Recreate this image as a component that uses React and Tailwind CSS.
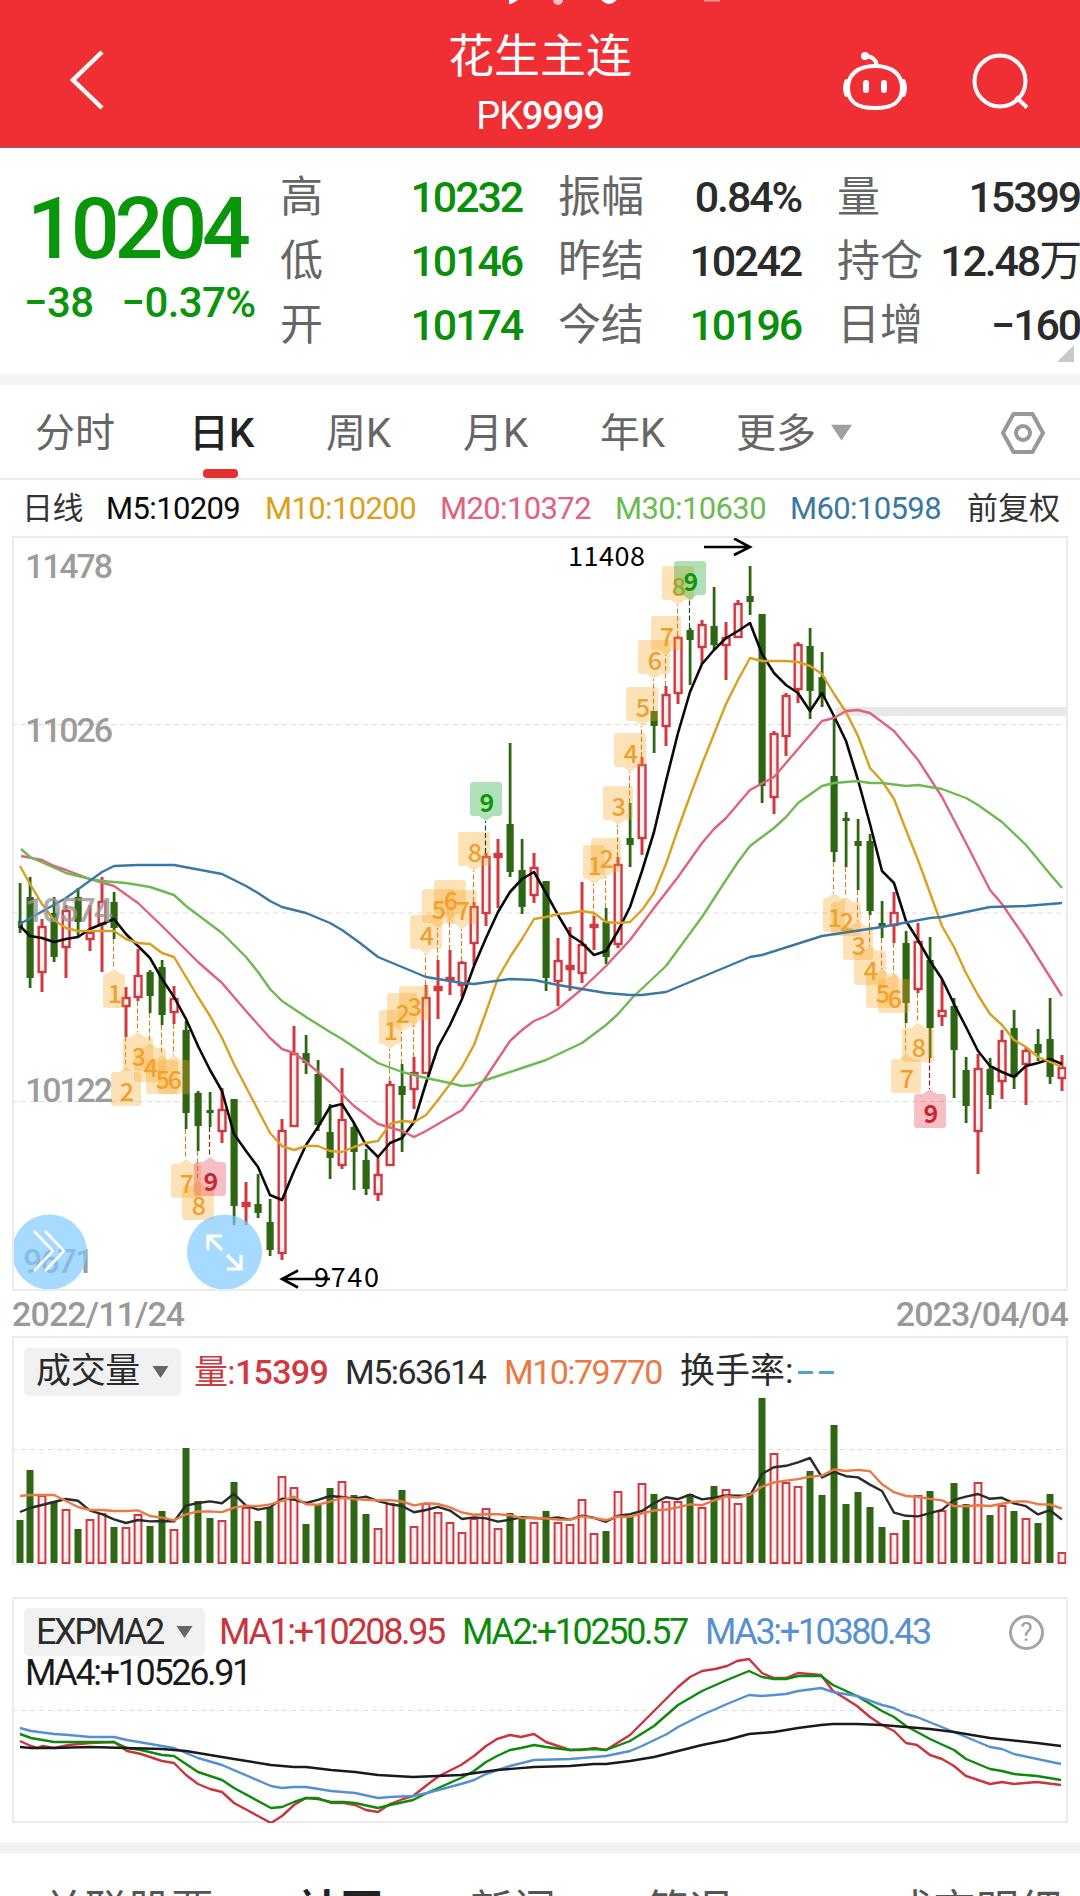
import React from 'react';
import clsx from 'clsx';

const GREEN = '#2f6614';
const RED = '#d0393f';

// x position of the n-th trading day, shared by all three panels
const dayX = (i) => (i === 0 ? 20 : 18 + i * 12);

// [up, high, bodyTop, bodyBottom, low]
const candles = [
  [0, 883, 921, 928, 933], [0, 877, 897, 978, 988], [1, 919, 926, 973, 992], [0, 897, 913, 957, 962],
  [1, 905, 910, 948, 978], [0, 888, 897, 922, 937], [1, 905, 932, 940, 951], [1, 877, 901, 925, 972],
  [0, 892, 902, 928, 939], [1, 987, 997, 1007, 1037], [1, 949, 975, 998, 1001], [0, 970, 972, 996, 1013],
  [0, 960, 967, 1015, 1025], [1, 986, 998, 1013, 1024], [0, 1021, 1030, 1113, 1129], [0, 1091, 1093, 1126, 1151],
  [0, 1092, 1110, 1113, 1127], [1, 1088, 1109, 1132, 1143], [0, 1099, 1099, 1206, 1225], [1, 1182, 1202, 1207, 1225],
  [0, 1174, 1204, 1213, 1218], [0, 1199, 1222, 1250, 1256], [1, 1119, 1130, 1254, 1260], [1, 1026, 1053, 1127, 1127],
  [0, 1035, 1053, 1063, 1074], [0, 1060, 1074, 1125, 1131], [0, 1104, 1132, 1158, 1179], [1, 1068, 1119, 1166, 1169],
  [0, 1123, 1127, 1152, 1190], [0, 1149, 1160, 1189, 1195], [1, 1158, 1174, 1195, 1201], [1, 1081, 1084, 1166, 1166],
  [0, 1064, 1086, 1095, 1152], [1, 1057, 1072, 1090, 1109], [1, 985, 997, 1074, 1074], [1, 960, 986, 991, 1019],
  [1, 950, 977, 981, 995], [1, 961, 962, 986, 997], [1, 902, 906, 944, 965], [1, 853, 856, 914, 926],
  [1, 839, 853, 858, 908], [0, 743, 824, 872, 877], [0, 839, 870, 907, 914], [1, 853, 867, 896, 903],
  [0, 881, 881, 978, 991], [1, 938, 960, 982, 1006], [1, 927, 965, 970, 991], [1, 882, 944, 974, 983],
  [1, 916, 924, 928, 950], [0, 908, 922, 957, 964], [1, 857, 864, 945, 948], [0, 803, 838, 845, 867],
  [1, 757, 764, 839, 855], [0, 711, 711, 726, 753], [1, 686, 694, 727, 746], [1, 636, 637, 694, 704],
  [0, 628, 630, 640, 685], [1, 620, 624, 648, 664], [0, 587, 626, 645, 650], [1, 622, 637, 646, 680],
  [1, 600, 603, 638, 638], [0, 566, 596, 602, 615], [0, 614, 614, 786, 803], [1, 731, 733, 798, 814],
  [1, 693, 695, 737, 756], [1, 642, 644, 690, 703], [0, 628, 646, 691, 719], [0, 652, 677, 697, 707],
  [0, 716, 776, 852, 862], [0, 812, 818, 821, 867], [0, 819, 841, 846, 890], [0, 834, 841, 911, 915],
  [0, 901, 923, 926, 938], [1, 892, 912, 926, 943], [0, 931, 943, 1003, 1023], [1, 923, 941, 990, 993],
  [0, 937, 960, 1028, 1058], [1, 980, 1010, 1017, 1026], [0, 998, 1006, 1050, 1098], [0, 1057, 1070, 1106, 1123],
  [1, 1054, 1068, 1132, 1174], [0, 1058, 1069, 1095, 1109], [1, 1030, 1040, 1082, 1099], [0, 1010, 1028, 1077, 1089],
  [1, 1047, 1050, 1065, 1105], [0, 1029, 1044, 1053, 1061], [0, 998, 1039, 1077, 1084], [1, 1055, 1067, 1079, 1091],
];

// one value per day
const m5 = [
  926, 936, 938, 942, 939, 937, 929, 924, 919, 934, 946, 958, 979, 997, 1019, 1046, 1070, 1091, 1134, 1151, 1167, 1195,
  1200, 1171, 1145, 1127, 1107, 1104, 1123, 1145, 1157, 1143, 1138, 1122, 1083, 1047, 1025, 999, 966, 938, 912, 892,
  879, 872, 893, 915, 935, 943, 955, 951, 931, 907, 871, 832, 781, 733, 692, 664, 650, 638, 631, 623, 654, 673, 685,
  693, 711, 693, 716, 741, 780, 824, 871, 883, 921, 940, 961, 979, 1004, 1027, 1051, 1066, 1072, 1077, 1066, 1063,
  1059, 1064,
];
const m10 = [
  866, 884, 904, 920, 928, 931, 931, 931, 931, 939, 943, 944, 953, 957, 977, 997, 1016, 1038, 1064, 1087, 1110, 1133,
  1146, 1150, 1146, 1146, 1151, 1152, 1147, 1143, 1141, 1124, 1121, 1122, 1115, 1100, 1084, 1067, 1045, 1012, 978, 957,
  939, 919, 917, 914, 913, 911, 913, 922, 923, 922, 910, 893, 864, 829, 796, 764, 734, 704, 680, 658, 661, 661, 661,
  662, 666, 674, 694, 712, 736, 768, 781, 799, 830, 860, 893, 926, 947, 973, 995, 1014, 1025, 1040, 1047, 1057, 1062,
  1067,
];

const longAverages = [
  {
    color: '#e0627d',
    points:
      '21,856 42,860 54,866 66,870 90,879 114,886 138,903 162,926 186,950 198,962 222,983 246,1011 270,1038 282,1049 294,1053 306,1062 330,1082 342,1094 354,1106 378,1124 402,1131 414,1137 426,1131 462,1110 474,1094 486,1077 510,1041 522,1030 534,1021 546,1016 558,1009 582,989 606,966 630,940 654,908 678,877 702,843 714,829 726,818 738,804 750,790 774,777 798,749 822,721 834,718 846,711 858,710 870,713 894,731 918,760 942,797 966,843 990,890 1002,904 1026,939 1050,977 1062,996',
  },
  {
    color: '#6dba52',
    points:
      '21,849 30,857 66,873 90,879 102,881 126,883 150,887 174,895 186,906 222,933 246,957 258,972 270,989 282,1001 306,1017 330,1032 342,1039 360,1051 378,1063 402,1072 426,1078 450,1083 462,1086 474,1085 486,1080 522,1068 546,1060 582,1043 606,1025 618,1014 633,997 666,966 702,917 726,880 738,862 750,846 774,828 786,817 798,803 822,786 834,783 858,781 870,783 882,783 906,786 918,785 942,789 966,798 978,805 1002,822 1026,845 1050,874 1062,888',
  },
  {
    color: '#3a78a3',
    points:
      '18,925 66,898 102,872 114,866 138,865 174,865 222,874 246,886 258,893 270,901 282,907 306,913 330,923 342,930 360,943 378,957 402,967 426,977 462,983 474,984 510,979 534,980 558,985 594,991 606,993 630,995 642,995 666,992 750,957 762,955 822,936 882,927 930,918 942,917 966,912 990,907 1026,906 1062,903',
  },
];

// nine-turn counters: [day, number, tip y], grouped by the side of the candle they hang on
const tagsBelow = [
  [8, 1, 969], [9, 2, 1067], [10, 3, 1032], [11, 4, 1043], [12, 5, 1055], [13, 6, 1055], [14, 7, 1159], [15, 8, 1181],
  [16, 9, 1157], [68, 1, 893], [69, 2, 897], [70, 3, 921], [71, 4, 946], [72, 5, 969], [73, 6, 974], [74, 7, 1054],
  [75, 8, 1023], [76, 9, 1089],
];
const tagsAbove = [
  [31, 1, 1049], [32, 2, 1032], [33, 3, 1025], [34, 4, 954], [35, 5, 928], [36, 6, 919], [37, 7, 929], [38, 8, 871],
  [39, 9, 821], [48, 1, 884], [49, 2, 877], [50, 3, 825], [51, 4, 772], [52, 5, 726], [53, 6, 679], [54, 7, 655],
  [55, 8, 605], [56, 9, 600],
];

// [up, top of the bar]
const volumes = [
  [0, 1520], [0, 1470], [1, 1495], [0, 1501], [1, 1509], [0, 1529], [1, 1519], [1, 1513], [0, 1527], [1, 1527],
  [1, 1514], [0, 1526], [0, 1511], [1, 1529], [0, 1448], [0, 1501], [0, 1518], [1, 1520], [0, 1482], [1, 1507],
  [0, 1521], [0, 1507], [1, 1476], [1, 1487], [0, 1524], [0, 1505], [0, 1488], [1, 1481], [0, 1495], [0, 1514],
  [1, 1528], [1, 1503], [0, 1490], [1, 1526], [1, 1503], [1, 1512], [1, 1522], [1, 1532], [1, 1518], [1, 1508],
  [1, 1528], [0, 1513], [0, 1519], [1, 1522], [0, 1511], [1, 1522], [1, 1524], [1, 1499], [1, 1533], [0, 1531],
  [1, 1491], [0, 1517], [1, 1483], [0, 1494], [1, 1501], [1, 1501], [0, 1494], [1, 1507], [0, 1486], [1, 1489],
  [1, 1503], [0, 1493], [0, 1398], [1, 1453], [1, 1482], [1, 1486], [0, 1471], [0, 1495], [0, 1425], [0, 1504],
  [0, 1492], [0, 1507], [0, 1527], [1, 1533], [0, 1520], [1, 1495], [0, 1491], [1, 1510], [0, 1483], [0, 1504],
  [1, 1482], [0, 1515], [1, 1505], [0, 1511], [1, 1518], [0, 1523], [0, 1494], [1, 1552],
];

const average = (n, seed) =>
  volumes.map((_, i) =>
    i < seed.length ? seed[i] : volumes.slice(i - n + 1, i + 1).reduce((sum, v) => sum + v[1], 0) / n
  );

const volumeM5 = average(5, [1512, 1508, 1505, 1502]);
const volumeM10 = average(10, [1496, 1495, 1495, 1495, 1501, 1507, 1510, 1510, 1511]);

const expma = [
  {
    color: '#c9353c',
    points:
      '20,1741 31,1746 37,1748 43,1746 54,1748 69,1745 90,1743 114,1742 127,1751 141,1754 162,1761 174,1763 186,1775 198,1784 210,1789 222,1792 234,1803 247,1810 258,1816 271,1823 282,1816 294,1805 306,1798 318,1798 331,1803 344,1803 355,1805 366,1810 378,1812 390,1804 403,1799 413,1796 427,1785 439,1776 461,1765 474,1756 486,1746 497,1739 510,1735 521,1737 534,1734 546,1742 558,1746 570,1750 582,1750 594,1748 606,1750 630,1735 642,1723 654,1711 667,1698 678,1687 690,1677 702,1671 715,1669 727,1666 737,1661 749,1659 762,1673 774,1678 786,1678 798,1673 821,1675 833,1691 846,1699 857,1706 870,1717 882,1725 894,1731 906,1743 917,1745 930,1755 942,1759 954,1766 966,1776 978,1780 990,1784 1002,1782 1014,1784 1037,1782 1061,1785',
  },
  {
    color: '#0b8a0b',
    points:
      '20,1734 31,1738 54,1742 114,1742 127,1748 141,1750 162,1755 174,1756 198,1772 222,1780 234,1788 271,1808 282,1807 294,1802 306,1798 318,1799 331,1802 344,1802 355,1803 378,1808 390,1805 413,1800 427,1793 461,1778 474,1771 486,1762 497,1756 510,1750 521,1748 534,1745 546,1747 570,1750 594,1749 606,1750 630,1741 654,1726 678,1705 702,1691 727,1680 749,1671 762,1677 774,1679 786,1679 798,1676 821,1676 833,1685 857,1696 882,1711 894,1717 906,1726 930,1739 954,1750 966,1759 990,1769 1002,1771 1014,1774 1037,1776 1061,1780',
  },
  {
    color: '#5690d0',
    points:
      '20,1728 31,1731 54,1734 69,1735 90,1737 114,1737 127,1740 162,1746 174,1748 198,1758 222,1765 271,1786 282,1788 294,1787 306,1787 331,1791 355,1793 378,1798 390,1797 413,1796 427,1793 461,1784 474,1780 486,1774 510,1766 534,1760 570,1759 606,1756 630,1751 642,1746 667,1734 678,1727 702,1715 727,1704 749,1695 762,1696 786,1694 798,1691 821,1688 833,1692 857,1696 882,1705 894,1708 906,1714 917,1717 954,1732 990,1747 1002,1749 1014,1754 1061,1764',
  },
  {
    color: '#1a1a1a',
    points:
      '20,1747 31,1748 54,1748 90,1747 162,1749 186,1751 210,1755 234,1759 271,1765 294,1767 306,1767 331,1770 355,1772 378,1775 413,1777 461,1775 497,1770 534,1767 570,1766 594,1764 606,1764 630,1761 654,1757 678,1751 702,1745 727,1740 749,1734 774,1732 798,1728 821,1725 833,1724 857,1724 882,1725 930,1729 954,1732 990,1738 1037,1743 1061,1746',
  },
];

const byDay = (values) => values.map((y, i) => `${dayX(i)},${y}`).join(' ');

const Line = ({ points, color, width = 2.4 }) => (
  <polyline points={points} fill="none" stroke={color} strokeWidth={width} strokeLinejoin="round" />
);

const Dashed = ({ y }) => <path d={`M12 ${y}H1067`} stroke="#dcdcdc" strokeWidth="1" strokeDasharray="5 4" />;

const Candle = ({ day, data: [up, high, top, bottom, low] }) => {
  const x = dayX(day);
  const flat = bottom - top < 7;
  if (!up) {
    return (
      <g fill={GREEN}>
        <rect x={x - 1.3} y={high} width="2.8" height={low - high} />
        <rect x={x - (day ? 3.5 : 2)} y={top} width={day ? 7.2 : 5} height={bottom - top} />
      </g>
    );
  }
  return (
    <g>
      <path d={`M${x} ${high}V${top}M${x} ${bottom}V${low}`} stroke={RED} strokeWidth="3" />
      <rect
        x={x - 3.3}
        y={top + 1}
        width="6.8"
        height={Math.max(bottom - top - 2, 1)}
        fill={flat ? RED : '#fdeef0'}
        stroke={RED}
        strokeWidth="2.4"
      />
    </g>
  );
};

const Tag = ({ day, number, tip, below }) => {
  const x = dayX(day);
  const nine = number === 9;
  const half = number === 1 ? 11 : number === 2 || number === 3 || number === 7 ? 15 : 16;
  const boxY = below ? tip + 5 : tip - 39;
  const nineColor = below ? '#c9252f' : '#0c970c';
  const nineBox = below ? '#e8434f' : '#18a32a';
  const wick = below ? candles[day][4] : candles[day][1];
  const s = below ? 1 : -1;
  return (
    <g>
      <path
        d={`M${x - 0.5} ${wick}V${tip}`}
        stroke={nine ? (below ? '#8b2222' : '#14501a') : '#c98a2a'}
        strokeWidth="1.2"
        strokeDasharray="5 2.5"
      />
      <g fill={nine ? nineBox : '#f9a826'} opacity={nine ? 0.34 : 0.33}>
        <path
          d={`M${x - half + 3} ${boxY}H${x + half - 3}q3 0 3 3v28q0 3-3 3H${x - half + 3}q-3 0-3-3v-28q0-3 3-3zM${x - 7} ${tip + 5 * s}L${x} ${tip}L${x + 7} ${tip + 5 * s}z`}
        />
      </g>
      <text
        x={x + 1}
        y={below ? tip + 34 : tip - 9}
        textAnchor="middle"
        fontSize="25"
        fontWeight={nine ? 700 : 500}
        fill={nine ? nineColor : '#eea02c'}
      >
        {number}
      </text>
    </g>
  );
};

const PriceChart = () => (
  <svg viewBox="14 538 1052 751" className="block h-full w-full font-['Noto_Sans_CJK_SC',sans-serif]">
    <Dashed y={724.5} />
    <Dashed y={913} />
    <Dashed y={1101.5} />
    <rect x="836" y="707" width="231" height="9" fill="#e8e8e8" />
    {candles.map((c, i) => (
      <Candle key={i} day={i} data={c} />
    ))}
    {tagsBelow.map(([day, number, tip]) => (
      <Tag key={day} day={day} number={number} tip={tip} below />
    ))}
    {tagsAbove.map(([day, number, tip]) => (
      <Tag key={day} day={day} number={number} tip={tip} />
    ))}
    <Line points={byDay(m5)} color="#0a0a0a" width={2.6} />
    <Line points={byDay(m10)} color="#d9a021" />
    {longAverages.map((l) => (
      <Line key={l.color} {...l} />
    ))}

    <g fill="none" stroke="#000" strokeWidth="2.6">
      <path d="M704 547H750M734 538.500L750 547L734 555" />
      <path d="M330 1279H282M298 1270.500L282 1279L298 1287.500" />
    </g>
    <text x="568" y="566" fontSize="27" textLength="77">11408</text>
    <text x="314" y="1287" fontSize="27" textLength="65">9740</text>

    <g fill="#969696" fillOpacity="0.95" fontSize="34" fontWeight="500" className="font-['Roboto',sans-serif]">
      <text x="25" y="578" textLength="88">11478</text>
      <text x="25" y="742" textLength="88">11026</text>
      <text x="25" y="922" textLength="88" fillOpacity="0.8">10574</text>
      <text x="25" y="1102" textLength="88">10122</text>
      <text x="23" y="1273" textLength="71">9671</text>
    </g>

    <g fill="#82cbff" fillOpacity="0.7">
      <circle cx="49.500" cy="1252" r="37.500" />
      <circle cx="224.500" cy="1252" r="37.500" />
    </g>
    <g fill="none" stroke="#fff" strokeWidth="2.600">
      <path d="M34 1231L53 1251L34 1271M45 1231L64 1251L45 1271" />
      <path strokeWidth="3.200" d="M208 1250V1236H222M208 1236L222 1250M227 1269H241V1255M241 1269L227 1255" />
    </g>
  </svg>
);

const VolumeChart = () => (
  <svg viewBox="14 1397 1052 167" className="block w-full">
    <Dashed y={1449.5} />
    {volumes.map(([up, top], i) =>
      up ? (
        <rect
          key={i}
          x={dayX(i) - 3.4}
          y={top + 1}
          width="6.8"
          height={1562 - top}
          fill="#fdeef0"
          stroke={RED}
          strokeWidth="2"
        />
      ) : (
        <rect key={i} x={dayX(i) - 3.5} y={top} width="7" height={1563 - top} fill={GREEN} />
      )
    )}
    <Line points={byDay(volumeM5)} color="#2b2b2b" />
    <Line points={byDay(volumeM10)} color="#ea7a45" />
  </svg>
);

const ExpmaChart = () => (
  <svg viewBox="14 1649 1052 174" className="block w-full">
    <Dashed y={1710.5} />
    {expma.map((l) => (
      <Line key={l.color} {...l} />
    ))}
  </svg>
);

const Caret = ({ className }) => (
  <svg viewBox="0 0 20 15" className={className}>
    <path d="M0 0H20L10 15z" fill="currentColor" />
  </svg>
);

const Header = () => (
  <header className="grid h-[148px] shrink-0 grid-cols-3 border-b-2 border-[#b84a4a] bg-[#f02f35] text-white">
    <div className="pt-[48px] pl-[68px]">
      <svg viewBox="0 0 38 64" className="h-[64px] w-[38px]" fill="none" stroke="#fff" strokeWidth="4.500">
        <path d="M34 4L5 32L34 60" />
      </svg>
    </div>
    <div className="flex flex-col items-center">
      {/* lower edge of the system status bar */}
      <svg viewBox="360 0 360 6" className="h-[6px] w-[360px] shrink-0" fill="#fff">
        <path d="M509 0h9q-3 2-7 4h-2z" />
        <circle cx="558" cy="0" r="5" opacity="0.7" />
        <circle cx="609" cy="-5" r="9" />
        <path d="M704 0h44v1.500h-44z" opacity="0.5" />
      </svg>
      <h1 className="mt-[22px] text-[46px] leading-[56px]">花生主连</h1>
      <p className="mt-[10px] text-[38px] leading-[44px] tracking-[-0.030em]">
        PK<span className="font-medium">9999</span>
      </p>
    </div>
    <div className="flex justify-end gap-[64px] pt-[50px] pr-[48px]">
      <svg viewBox="842 50 66 62" className="h-[62px] w-[66px]" fill="none" stroke="#fff" strokeWidth="4">
        <circle cx="865" cy="56" r="4" fill="#fff" stroke="none" />
        <path d="M866 56Q876 57 876.500 65" />
        <path d="M875 66C893 66 902 75 902 88C902 102 893 108 875 108C857 108 848 102 848 88C848 75 857 66 875 66z" />
        <path d="M846.500 81Q843.500 88 846.500 95M903.500 81Q906.500 88 903.500 95" strokeLinecap="round" />
        <path d="M866 83V90M884 83V90" strokeWidth="6" strokeLinecap="round" />
      </svg>
      <svg viewBox="972 50 60 62" className="h-[62px] w-[60px]" fill="none" stroke="#fff" strokeWidth="4">
        <circle cx="1000" cy="81" r="25.500" />
        <path d="M1016 97L1027 107.500" />
      </svg>
    </div>
  </header>
);

const Stat = ({ label, value, green }) => (
  <div className="flex items-center justify-between">
    <span className="text-[43px] text-[#666]">{label}</span>
    <span className={clsx('text-[43px] font-medium tracking-[-0.050em]', green ? 'text-[#0a8f0a]' : 'text-[#2b2b2b]')}>
      {value}
    </span>
  </div>
);

const Quote = () => (
  <section className="relative flex h-[226px] shrink-0 pt-[18px] whitespace-nowrap">
    <div className="w-[280px] shrink-0 font-medium text-[#0a960a]">
      <p className="mt-[19px] pl-[27px] text-[86px] leading-[88px] tracking-[-0.060em]">10204</p>
      <p className="flex gap-[28px] pl-[24px] text-[42px] leading-[60px] tracking-[-0.015em]">
        <span>−38</span>
        <span>−0.37%</span>
      </p>
    </div>
    <div className="grid flex-1 grid-cols-[242px_243px_243px] grid-rows-[63px_64px_64px] gap-x-[36px]">
      <Stat label="高" value="10232" green />
      <Stat label="振幅" value="0.84%" />
      <Stat label="量" value="15399" />
      <Stat label="低" value="10146" green />
      <Stat label="昨结" value="10242" />
      <Stat
        label="持仓"
        value={
          <>
            12.48<span className="font-normal">万</span>
          </>
        }
      />
      <Stat label="开" value="10174" green />
      <Stat label="今结" value="10196" green />
      <Stat label="日增" value="−160" />
    </div>
    <svg viewBox="0 0 17 17" className="absolute right-[6px] bottom-[12px] h-[17px] w-[17px]">
      <path d="M17 0V17H0z" fill="#c9c9c9" />
    </svg>
  </section>
);

const periods = [
  { label: '分时', width: 'w-[154px]' },
  { label: '日K', width: 'w-[137px]', active: true },
  { label: '周K', width: 'w-[137px]' },
  { label: '月K', width: 'w-[137px]' },
  { label: '年K', width: 'w-[136px]' },
  { label: '更多', width: 'w-[92px]' },
];

const PeriodTabs = () => (
  <nav className="flex h-[95px] shrink-0 items-stretch border-b-2 border-[#e9ecea] pl-[35px] text-[40px] text-[#666]">
    {periods.map((p) => (
      <div key={p.label} className={clsx('relative flex items-center pt-[4px]', p.width, p.active && 'font-medium text-[#222]')}>
        {p.label}
        {p.active && <span className="absolute bottom-0 left-[14px] h-[9px] w-[35px] rounded-[4px] bg-[#e33033]" />}
      </div>
    ))}
    <Caret className="mt-[39px] ml-[3px] h-[17px] w-[21px] text-[#a0a0a0]" />
    <svg viewBox="0 0 46 44" className="mt-[26px] mr-[34px] ml-auto h-[44px] w-[46px]" fill="none" stroke="#989898" strokeWidth="4">
      <path d="M13.500 3H32.500L43 22L32.500 41H13.500L3 22z" strokeLinejoin="round" />
      <circle cx="23" cy="22" r="7" />
    </svg>
  </nav>
);

const MaLegend = () => (
  <div className="grid h-[56px] shrink-0 grid-cols-[84px_159px_175px_175px_175px_177px_auto] items-center pt-[2px] pl-[22px] text-[31px] tracking-[-0.020em] whitespace-nowrap">
    <span className="text-[#333]">日线</span>
    <span className="text-[#0a0a0a]">M5:10209</span>
    <span className="text-[#dc9f1c]">M10:10200</span>
    <span className="text-[#e0627d]">M20:10372</span>
    <span className="text-[#6dba52]">M30:10630</span>
    <span className="text-[#3a78a3]">M60:10598</span>
    <span className="tracking-normal text-[#333]">前复权</span>
  </div>
);

const IndicatorButton = ({ children, className }) => (
  <button className={clsx('flex h-[48px] shrink-0 items-center justify-between rounded-[5px] bg-[#f1f1f1] px-[12px] text-[#2b2b2b]', className)}>
    {children}
    <Caret className="h-[12px] w-[17px] text-[#666]" />
  </button>
);

const bottomTabs = [
  { label: '关联股票', className: 'w-[255px]' },
  { label: '社区', className: 'w-[173px] font-bold text-[#222]' },
  { label: '新闻', className: 'w-[176px]' },
  { label: '简况', className: 'w-[244px]' },
  { label: '成交明细', className: 'w-[180px]' },
];

const App = () => (
  <div className="flex h-[1896px] w-[1080px] flex-col overflow-hidden bg-white font-['Roboto','Noto_Sans_CJK_SC',sans-serif]">
    <Header />
    <Quote />
    <div className="h-[11px] shrink-0 bg-[#f4f4f4]" />
    <PeriodTabs />
    <MaLegend />

    <section className="mx-[12px] h-[755px] w-[1056px] shrink-0 border-2 border-[#ebebeb]">
      <PriceChart />
    </section>
    <div className="flex h-[45px] shrink-0 items-center justify-between pt-[2px] pr-[12px] pl-[12px] text-[34px] font-medium tracking-[-0.026em] text-[#999]">
      <span>2022/11/24</span>
      <span>2023/04/04</span>
    </div>

    <section className="mx-[12px] flex h-[229px] w-[1056px] shrink-0 flex-col justify-between border-2 border-b border-[#ebebeb]">
      <div className="mt-[9px] flex h-[50px] items-center pl-[10px] text-[34px] tracking-[-0.045em] whitespace-nowrap text-[#2b2b2b]">
        <IndicatorButton className="w-[157px] text-[35px] tracking-[-0.010em]">成交量</IndicatorButton>
        <span className="ml-[13px] w-[151px] tracking-[-0.020em] text-[#d0393f]">量:<span className="font-medium">15399</span></span>
        <span className="w-[159px]">M5:63614</span>
        <span className="w-[176px] text-[#ea7a45]">M10:79770</span>
        <span className="text-[35px] tracking-normal">换手率:</span>
        <span className="ml-[5px] flex gap-[6px]">
          <i className="h-[3px] w-[15px] bg-[#4ba3df]" />
          <i className="h-[3px] w-[15px] bg-[#4ba3df]" />
        </span>
      </div>
      <VolumeChart />
    </section>

    <section className="mx-[12px] mt-[32px] flex h-[226px] w-[1056px] shrink-0 flex-col border-2 border-[#ebebeb]">
      <div className="mt-[9px] flex h-[48px] shrink-0 items-center pl-[10px] text-[36px] tracking-[-0.066em] whitespace-nowrap">
        <IndicatorButton className="w-[181px]">EXPMA2</IndicatorButton>
        <span className="ml-[14px] w-[243px] text-[#c9353c]">MA1:+10208.95</span>
        <span className="w-[243px] text-[#0b8a0b]">MA2:+10250.57</span>
        <span className="text-[#5690d0]">MA3:+10380.43</span>
        <span className="mr-[22px] ml-auto flex h-[35px] w-[35px] items-center justify-center rounded-full border-3 border-[#a5a5a5] text-[26px] tracking-normal text-[#a0a0a0]">
          ?
        </span>
      </div>
      <div className="relative -mt-[7px]">
        <ExpmaChart />
        <p className="absolute top-[6px] left-[11px] text-[36px] leading-[36px] tracking-[-0.066em] text-[#1a1a1a]">MA4:+10526.91</p>
      </div>
    </section>

    <div className="mt-[19px] h-[12px] shrink-0 bg-[#f4f4f4]" />
    <nav className="flex h-[114px] shrink-0 items-center pl-[42px] text-[43px] whitespace-nowrap text-[#555]">
      {bottomTabs.map((t) => (
        <span key={t.label} className={t.className}>{t.label}</span>
      ))}
    </nav>
  </div>
);

export default App;
